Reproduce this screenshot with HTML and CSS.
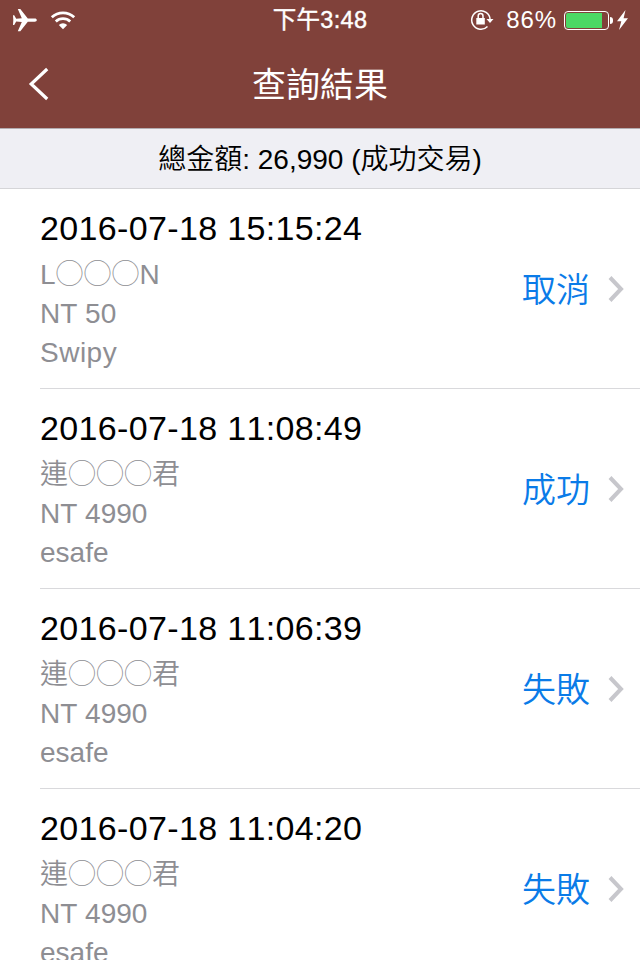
FILE: index.html
```html
<!DOCTYPE html>
<html lang="zh-Hant">
<head>
  <meta charset="UTF-8">
  <meta name="viewport" content="width=device-width, initial-scale=1.0">
  <title>查詢結果</title>
  <link rel="stylesheet" href="styles.css">
</head>
<body>
  <header class="header">
    <div class="status-bar">
      <div class="status-left">
        <svg class="plane" width="25" height="24" viewBox="0 0 25 24"><path d="M24.800 12.100c0-1.200-.8-1.700-2.100-1.700H15.800L8.300 1H5.800l4 9.200-5.600.6L2.200 7.300H1l.3 4.800L1 17h1.200l2-3.500 5.600.5-4 9.200h2.500l7.500-9.400h6.900c1.300 0 2.100-.5 2.100-1.700z" fill="#fff"/></svg>
        <svg class="wifi" width="26" height="20" viewBox="0 0 26 20"><path d="M1.800 7.200a16.500 16.500 0 0 1 22.400 0M5.800 11.500a10.600 10.600 0 0 1 14.400 0" fill="none" stroke="#fff" stroke-width="2.800"/><path d="M13 19.300l-4.200-4.300a6.200 6.200 0 0 1 8.400 0z" fill="#fff"/></svg>
      </div>
      <div class="status-time">下午3:48</div>
      <div class="status-right">
        <svg class="lock" width="24" height="22" viewBox="0 0 24 22"><path d="M17.500 17.500a9.200 9.200 0 1 1 2.600-7" fill="none" stroke="#fff" stroke-width="1.500"/><path d="M16.500 10h7l-3.500 4z" fill="#fff"/><path d="M6.300 9h8.500v6.500H6.300z" fill="#fff"/><path d="M8.200 9.500V7a2.400 2.400 0 0 1 4.800 0v2.500" fill="none" stroke="#fff" stroke-width="1.500"/></svg>
        <span class="percent">86%</span>
        <span class="battery"><span class="level"></span></span>
        <span class="battery-cap"></span>
        <svg class="bolt" width="11" height="20" viewBox="0 0 11 20"><path d="M8.500 0L0 11.200h4.300L2 20 11 8.200H6.600z" fill="#fff"/></svg>
      </div>
    </div>
    <div class="nav-bar">
      <svg class="back" width="22" height="34" viewBox="0 0 22 34"><path d="M19.200 2L3.200 17l16 15" fill="none" stroke="#fff" stroke-width="3.200"/></svg>
      <h1>查詢結果</h1>
    </div>
  </header>
  <div class="total">總金額: 26,990 (成功交易)</div>
  <ul class="list">
    <li class="item">
      <div class="info">
        <h2>2016-07-18 15:15:24</h2>
        <p>L<span class="mask">◯◯◯</span>N</p>
        <p>NT 50</p>
        <p class="wide">Swipy</p>
      </div>
      <span class="state">取消</span>
      <svg class="arrow" width="16" height="26" viewBox="0 0 16 26"><path d="M2 1.500l11 11.500L2 24.500" fill="none" stroke="#c7c7cc" stroke-width="4"/></svg>
    </li>
    <li class="item">
      <div class="info">
        <h2>2016-07-18 11:08:49</h2>
        <p>連<span class="mask">◯◯◯</span>君</p>
        <p>NT 4990</p>
        <p>esafe</p>
      </div>
      <span class="state">成功</span>
      <svg class="arrow" width="16" height="26" viewBox="0 0 16 26"><path d="M2 1.500l11 11.500L2 24.500" fill="none" stroke="#c7c7cc" stroke-width="4"/></svg>
    </li>
    <li class="item">
      <div class="info">
        <h2>2016-07-18 11:06:39</h2>
        <p>連<span class="mask">◯◯◯</span>君</p>
        <p>NT 4990</p>
        <p>esafe</p>
      </div>
      <span class="state">失敗</span>
      <svg class="arrow" width="16" height="26" viewBox="0 0 16 26"><path d="M2 1.500l11 11.500L2 24.500" fill="none" stroke="#c7c7cc" stroke-width="4"/></svg>
    </li>
    <li class="item">
      <div class="info">
        <h2>2016-07-18 11:04:20</h2>
        <p>連<span class="mask">◯◯◯</span>君</p>
        <p>NT 4990</p>
        <p>esafe</p>
      </div>
      <span class="state">失敗</span>
      <svg class="arrow" width="16" height="26" viewBox="0 0 16 26"><path d="M2 1.500l11 11.500L2 24.500" fill="none" stroke="#c7c7cc" stroke-width="4"/></svg>
    </li>
  </ul>
</body>
</html>
```
FILE: styles.css
```css
* {
  box-sizing: border-box;
}

body {
  font-family: "Liberation Sans", "Noto Sans CJK TC", sans-serif;
  font-kerning: none;
  margin: 0;
  height: 960px;
  overflow: hidden;
  background: #fff;
}

.header {
  height: 129px;
  background: #80413a;
  border-bottom: 1px solid #b3acb0;
  color: #fff;
}

.status-bar {
  display: grid;
  grid-template-columns: 1fr auto 1fr;
  align-items: center;
  height: 40px;
  padding: 0 12px;
}

.status-left,
.status-right {
  display: flex;
  align-items: center;
}

.status-left {
  gap: 13px;
}

.plane,
.wifi {
  margin-bottom: 1px;
}

.status-right {
  justify-content: flex-end;
}

.status-time {
  font-size: 23.5px;
  line-height: 40px;
  letter-spacing: 0.3px;
  -webkit-text-stroke: 0.4px #fff;
}

.percent {
  font-size: 24px;
  line-height: 40px;
  margin: 0 7px 0 12px;
  letter-spacing: 0.9px;
}

.battery {
  width: 45px;
  height: 19px;
  padding: 1px;
  border: 1px solid #fff;
  border-radius: 4px;
}

.level {
  display: block;
  width: 36px;
  height: 15px;
  background: #4cd964;
  border-radius: 2px 0 0 2px;
}

.battery-cap {
  width: 3px;
  height: 7px;
  margin: 0 4px 0 1px;
  background: #fff;
  border-radius: 0 3px 3px 0;
}

.nav-bar {
  display: grid;
  grid-template-columns: 60px 1fr 60px;
  align-items: center;
  height: 88px;
}

.back {
  margin-left: 28px;
}

h1 {
  margin: 0;
  padding-top: 3px;
  text-align: center;
  font-size: 34px;
  font-weight: 400;
  line-height: 85px;
}

.total {
  height: 60px;
  border-bottom: 1px solid #d5d5d8;
  background: #efeff4;
  text-align: center;
  font-size: 28px;
  font-weight: 350;
  line-height: 62px;
}

.list {
  margin: 0;
  padding: 0 0 0 40px;
  list-style: none;
}

.item {
  display: flex;
  align-items: center;
  height: 200px;
  padding-right: 16px;
  border-bottom: 1px solid #d9d9dc;
}

.info {
  flex: 1;
}

h2 {
  margin: 0 0 4px;
  font-size: 34px;
  font-weight: 400;
  line-height: 46px;
  letter-spacing: 0.35px;
}

p {
  margin: 0;
  color: #8e8e93;
  font-size: 28px;
  font-weight: 350;
  line-height: 39px;
}

.wide {
  letter-spacing: 0.5px;
}

.mask {
  font-family: "Noto Sans CJK TC", sans-serif;
  font-weight: 300;
  line-height: 1;
}

.state {
  margin: 0 18px 2px 0;
  color: #0a7be8;
  font-size: 34px;
  font-weight: 350;
}
```
